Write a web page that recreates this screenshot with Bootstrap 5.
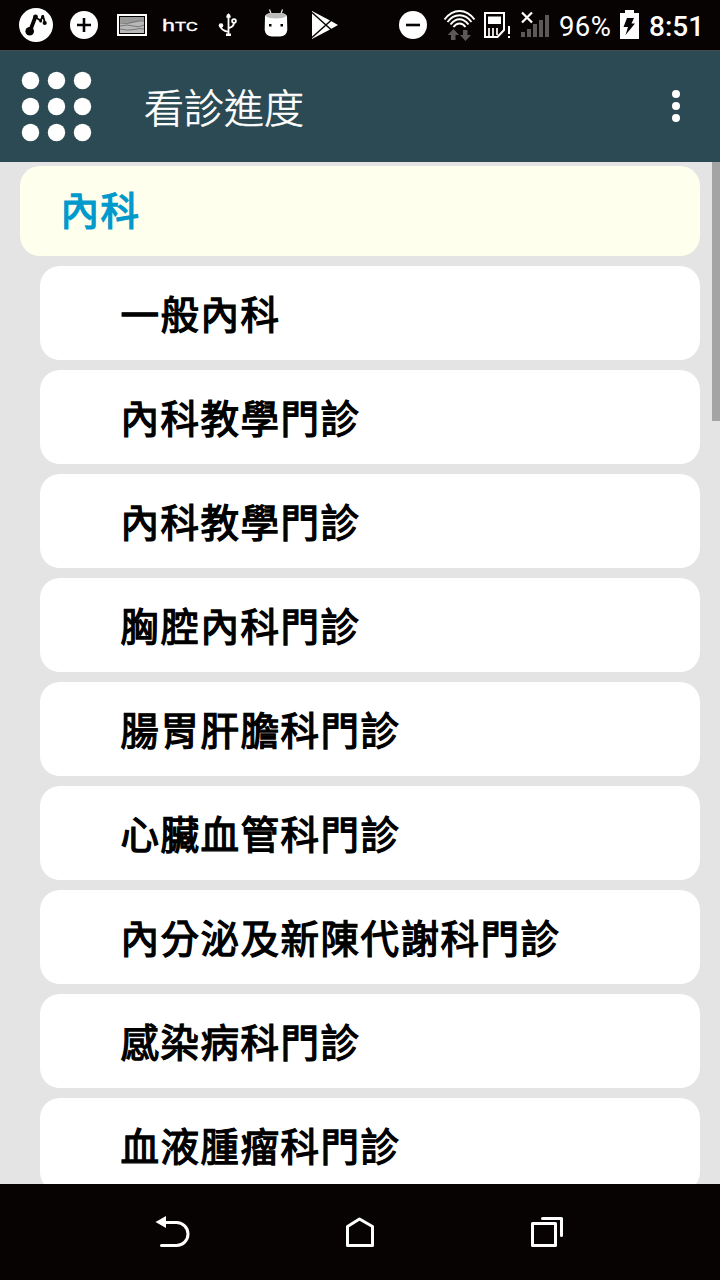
<!DOCTYPE html>
<html lang="zh-Hant">
<head>
<meta charset="utf-8">
<meta name="viewport" content="width=device-width, initial-scale=1">
<title>看診進度</title>
<link href="https://cdn.jsdelivr.net/npm/bootstrap@5.3.0/dist/css/bootstrap.min.css" rel="stylesheet">
<style>
  body { width: 720px; height: 1280px; background: #e4e4e4; font-family: "Noto Sans CJK TC", sans-serif; }
  svg { display: block; flex: none; }
  .status-bar { height: 50px; background: #070302; font-family: Roboto, sans-serif; color: #fff; }
  .status-bar .percent { width: 61px; padding-left: 4px; font-size: 27.5px; line-height: 53px; white-space: nowrap; letter-spacing: .4px; }
  .status-bar .clock { width: 76px; padding-left: 5px; font-size: 28px; font-weight: 500; line-height: 53px; white-space: nowrap; }
  .app-bar { height: 112px; background: #2c4a53; box-shadow: inset 0 1px #474b4c; color: #fff; }
  .app-title { font-size: 40px; font-weight: 300; line-height: 60px; margin: 0 0 0 52px; -webkit-text-stroke: .6px #fff; }
  .sheet { padding: 4px 20px 0; min-height: 0; }
  .section-head, .dept { border: 0; border-radius: 20px; font-size: 38.5px; letter-spacing: 1.5px; white-space: nowrap; font-weight: 400; -webkit-text-stroke: 1.3px currentColor; }
  .section-head { height: 90px; background: #feffed; color: #0099cc; padding: 0 40.5px 4px; }
  .dept { height: 94px; margin-left: 20px; padding: 0 80.5px; color: #000; background: #fff; }
  .dept-list { gap: 10px; }
  .scroll-thumb { top: 0; right: 0; width: 8px; height: 259px; background: #a4a4a4; }
  .nav-keys { height: 96px; background: #070302; }
</style>
</head>
<body class="d-flex flex-column overflow-hidden m-0">
<header class="status-bar d-flex flex-shrink-0">
  <svg width="60" height="50" viewBox="0 0 60 50"><circle cx="36" cy="25" r="17" fill="#fff"/><g stroke="#070302" fill="none" stroke-linecap="round" stroke-linejoin="round"><path d="M30 31 35 18" stroke-width="3.8"/><path d="M35 17 40.500 20.500 43 16 45 23" stroke-width="1.800"/></g><g fill="#070302"><circle cx="29.700" cy="31.300" r="4.300"/><circle cx="35.500" cy="16.800" r="2.400"/><circle cx="44.700" cy="23" r="2.100"/><circle cx="40.700" cy="21" r="1.500"/><circle cx="42.700" cy="16.500" r="1.400"/></g></svg>
  <svg width="48" height="50" viewBox="60 0 48 50"><circle cx="84" cy="25" r="14" fill="#fff"/><path d="M77 25H91M84 18V32" stroke="#070302" stroke-width="2.6"/></svg>
  <svg width="48" height="50" viewBox="108 0 48 50"><path d="M117 14H147V36H117Z" fill="#fff"/><path d="M119 16H145V34H119Z" fill="#070302"/><path d="M120 17H144V33H120Z" fill="#b8b8b8"/><path d="M120 17H144V20Q137 21 132 23 126 23 120 22Z" fill="#999"/><path d="M120 23Q128 24.500 134 22 139 20.500 144 21M120 26Q127 24 133 26T144 25M120 29Q128 31 134 29.500T144 29" fill="none" stroke="#666" stroke-width=".8"/></svg>
  <svg width="48" height="50" viewBox="156 0 48 50"><text x="162" y="31" textLength="36" lengthAdjust="spacingAndGlyphs" fill="#fff" stroke="#fff" stroke-width=".3" font-family="Roboto, sans-serif" font-weight="400" font-size="16.5">h<tspan font-size="13">TC</tspan></text></svg>
  <svg width="48" height="50" viewBox="204 0 48 50"><g fill="none" stroke="#fff" stroke-width="1.8"><path d="M228.500 17V34M228.500 32Q220.500 30 220.500 26M228.500 28Q234 27 234 22"/><circle cx="234" cy="21" r="1.900"/></g><g fill="#fff"><path d="M228.500 13 231 17.500H226Z"/><circle cx="228.500" cy="16" r="2"/><circle cx="221" cy="25.500" r="2.300"/><path d="M226 33.500H231V36H226Z"/></g></svg>
  <svg width="48" height="50" viewBox="252 0 48 50"><path d="M269.500 9.500 271.500 15M282.500 9.500 280.500 15" stroke="#eee" stroke-width="1.200"/><path d="M265 16Q267 13 272 13H280Q285 13 287 16L287.300 30Q286.500 36 280 36.500H272Q265.500 36 264.700 30Z" fill="#fff"/><path d="M265 16Q267 13 272 13H280Q285 13 287 16 283 18.500 276 18.500T265 16Z" fill="#bbb"/><path d="M269 24H271.500V26.500H269ZM280.500 24H283V26.500H280.500Z" fill="#070302"/></svg>
  <svg width="48" height="50" viewBox="300 0 48 50"><path d="M312 11 331 21 338 25 331 29 312 39Z" fill="#fff"/><path d="M312 12.500 331.500 30M312 37.500 331.500 20" stroke="#070302" stroke-width="1.500"/></svg>
  <svg class="ms-auto" width="48" height="50" viewBox="390 0 48 50"><circle cx="413" cy="25" r="14" fill="#fff"/><path d="M406 25H420" stroke="#070302" stroke-width="2.6"/></svg>
  <svg width="42" height="50" viewBox="438 0 42 50"><g fill="none" stroke="#fff" stroke-width="2"><path d="M444.500 19.500Q451 11 459.500 11T474.500 19.500"/><path d="M447.500 22Q452.500 15.200 459.500 15.200T471.500 22"/><path d="M450.500 24.500Q454.500 19.300 459.500 19.300T468.500 24.500"/><path d="M453.500 27Q456 23.500 459.500 23.500T465.500 27"/></g><path d="M453.500 29 459 35H455.500V40H451V35H447.500ZM465.500 41 460 35H463V30H467.500V35H471Z" fill="#5b5857"/></svg>
  <svg width="35" height="50" viewBox="480 0 35 50"><path d="M485 13H504V30L497.500 37H485Z" fill="none" stroke="#fff" stroke-width="2"/><path d="M488 16.500H501V24H488Z" fill="#fff"/><path d="M489 28V37M493 28V37M497 28V35" stroke="#fff" stroke-width="1.700"/><path d="M508 26H510V34H508ZM508 36H510V38H508Z" fill="#fff"/></svg>
  <svg width="40" height="50" viewBox="515 0 40 50"><path d="M521 32H525V37H521ZM527 29H531V37H527ZM533 24H537V37H533ZM539 20H543V37H539ZM545 15H549V37H545Z" fill="#5b5857"/><path d="M522 12.500 532 22.500M532 12.500 522 22.500" stroke="#fff" stroke-width="2.200"/></svg>
  <span class="percent">96%</span>
  <svg width="28" height="50" viewBox="616 0 28 50"><path d="M620 13H625V10H634V13H639V39H620Z" fill="#fff"/><path d="M627 18H634L631.500 23.500H635L625.500 35 628 27H623.500Z" fill="#070302"/></svg>
  <span class="clock">8:51</span>
</header>

<nav class="app-bar d-flex align-items-center flex-shrink-0">
  <svg width="92" height="112" viewBox="0 50 92 112" fill="#fff"><g><circle cx="30.500" cy="80.500" r="8.700"/><circle cx="56.500" cy="80.500" r="8.700"/><circle cx="82.500" cy="80.500" r="8.700"/><circle cx="30.500" cy="106.500" r="8.700"/><circle cx="56.500" cy="106.500" r="8.700"/><circle cx="82.500" cy="106.500" r="8.700"/><circle cx="30.500" cy="132.500" r="8.700"/><circle cx="56.500" cy="132.500" r="8.700"/><circle cx="82.500" cy="132.500" r="8.700"/></g></svg>
  <span class="app-title">看診進度</span>
  <svg class="ms-auto" width="60" height="112" viewBox="660 50 60 112" fill="#fff"><circle cx="676" cy="94" r="4"/><circle cx="676" cy="106" r="4"/><circle cx="676" cy="118" r="4"/></svg>
</nav>

<main class="sheet flex-grow-1 overflow-hidden position-relative">
  <div class="dept-list d-flex flex-column">
    <div class="section-head d-flex align-items-center flex-shrink-0">內科</div>
    <div class="dept d-flex align-items-center flex-shrink-0">一般內科</div>
    <div class="dept d-flex align-items-center flex-shrink-0">內科教學門診</div>
    <div class="dept d-flex align-items-center flex-shrink-0">內科教學門診</div>
    <div class="dept d-flex align-items-center flex-shrink-0">胸腔內科門診</div>
    <div class="dept d-flex align-items-center flex-shrink-0">腸胃肝膽科門診</div>
    <div class="dept d-flex align-items-center flex-shrink-0">心臟血管科門診</div>
    <div class="dept d-flex align-items-center flex-shrink-0">內分泌及新陳代謝科門診</div>
    <div class="dept d-flex align-items-center flex-shrink-0">感染病科門診</div>
    <div class="dept d-flex align-items-center flex-shrink-0">血液腫瘤科門診</div>
  </div>
  <div class="scroll-thumb position-absolute"></div>
</main>

<footer class="nav-keys d-flex flex-shrink-0">
  <svg width="266" height="96" viewBox="0 1184 266 96"><path d="M164 1222.500H176.500A11.500 11.500 0 0 1 176.500 1245.500H161.500" fill="none" stroke="#fff" stroke-width="3" stroke-linecap="round"/><path d="M155.500 1222 166 1216V1228Z" fill="#fff"/></svg>
  <svg width="188" height="96" viewBox="266 1184 188 96"><path d="M347.500 1226.500 359.500 1219 372.500 1226.500V1245.500H347.500Z" fill="none" stroke="#fff" stroke-width="3" stroke-linejoin="round"/></svg>
  <svg width="266" height="96" viewBox="454 1184 266 96"><path d="M532.500 1223.500H555.500V1245.500H532.500ZM542.500 1218.500H561.500V1235.500" fill="none" stroke="#fff" stroke-width="3" stroke-linejoin="round" stroke-linecap="round"/></svg>
</footer>
<script src="https://cdn.jsdelivr.net/npm/bootstrap@5.3.0/dist/js/bootstrap.bundle.min.js"></script>
</body>
</html>
